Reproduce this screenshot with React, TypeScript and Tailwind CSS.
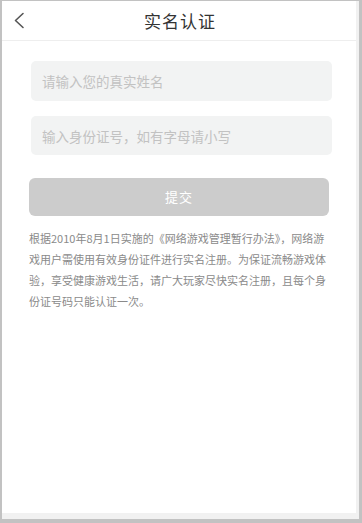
import { useState } from 'react'

const cjk = { fontFamily: '"Noto Sans CJK SC", "Noto Sans", sans-serif' }

function BackIcon() {
  return (
    <svg width="12" height="17" viewBox="0 0 12 17" fill="none">
      <path d="M10 1.5 L2.5 8.5 L10 15.5" stroke="#555" strokeWidth="1.6" strokeLinecap="round" strokeLinejoin="round" />
    </svg>
  )
}

export default function App() {
  const [name, setName] = useState('')
  const [idNo, setIdNo] = useState('')

  return (
    <div className="h-[523px] w-[362px] bg-[#c2c2c2] pb-[4px] pl-[2px] pr-[3px] pt-[1px]" style={cjk}>
      <div className="flex h-full flex-col bg-[#f1f1f1] pb-[6px] pr-[3px]">
        <div className="flex flex-1 flex-col bg-white">
          {/* header */}
          <header className="relative flex h-[40px] shrink-0 items-center justify-center border-b border-[#eeeeee]">
            <button className="absolute left-[11px] top-[11px] flex h-[17px] w-[12px] items-center">
              <BackIcon />
            </button>
            <h1 className="pl-[2px] text-[17px] tracking-[1px] text-[#333333]">实名认证</h1>
          </header>

          <div className="flex flex-col pl-[27px] pr-[27px]">
            <input
              value={name}
              onChange={(e) => setName(e.target.value)}
              placeholder="请输入您的真实姓名"
              className="mt-[20px] ml-[2px] h-[40px] w-[301px] rounded-[5px] bg-[#f2f3f3] px-[11px] text-[13.5px] text-[#333] outline-none placeholder:text-[#c2c2c2]"
            />
            <input
              value={idNo}
              onChange={(e) => setIdNo(e.target.value)}
              placeholder="输入身份证号，如有字母请小写"
              className="mt-[15px] ml-[2px] h-[39px] w-[301px] rounded-[5px] bg-[#f2f3f3] px-[11px] text-[13.5px] text-[#333] outline-none placeholder:text-[#c2c2c2]"
            />
            <button className="mt-[23px] h-[38px] w-[300px] rounded-[6px] bg-[#cccccc] text-[13px] tracking-[1px] text-white">
              提交
            </button>
            <p className="mt-[12px] w-[300px] text-[11px] leading-[21px] text-[#8a8a8a]">
              根据2010年8月1日实施的《网络游戏管理暂行办法》，网络游戏用户需使用有效身份证件进行实名注册。为保证流畅游戏体验，享受健康游戏生活，请广大玩家尽快实名注册，且每个身份证号码只能认证一次。
            </p>
          </div>
        </div>
      </div>
    </div>
  )
}
